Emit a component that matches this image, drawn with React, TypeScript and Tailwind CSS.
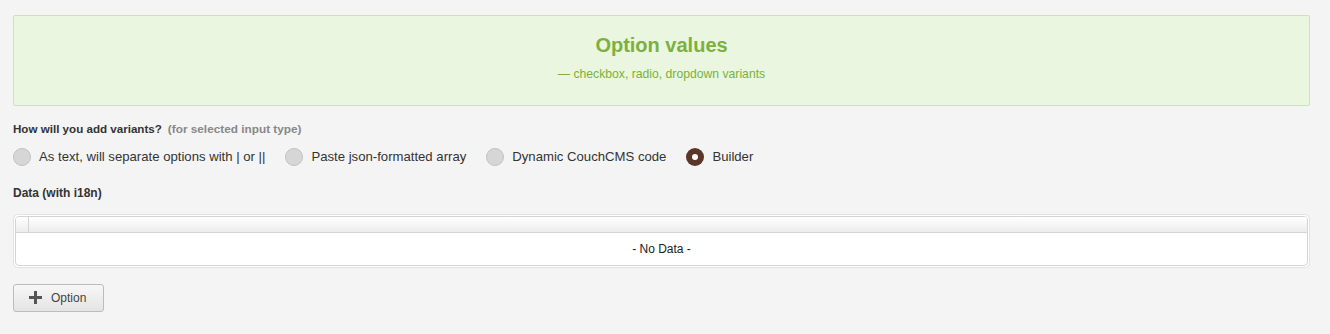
import React from "react";

const Radio = ({ checked, label }: { checked?: boolean; label: string }) => (
  <label className="flex items-center">
    {checked ? (
      <span className="flex h-[18px] w-[18px] items-center justify-center rounded-full bg-[#5c3727]">
        <span className="h-[6px] w-[6px] rounded-full bg-white" />
      </span>
    ) : (
      <span className="h-[18px] w-[18px] rounded-full border border-[#c2c2c2] bg-[#d6d6d6]" />
    )}
    <span className="ml-[8px] text-[13.15px] text-[#333]">{label}</span>
  </label>
);

export default function App() {
  return (
    <div
      className="h-[334px] w-[1330px] bg-[#f4f4f4] pl-[13px] pt-[15px]"
      style={{ fontFamily: '"Liberation Sans", Arial, sans-serif' }}
    >
      <div className="w-[1297px]">
        <div className="flex h-[91px] flex-col items-center rounded-[2px] border border-[#cde3b4] bg-[#eaf6e0]">
          <h2 className="mt-[17px] text-[20px] font-bold leading-[24px] text-[#7bb13c]">Option values</h2>
          <p className="mt-[10px] text-[12.2px] leading-[14px] text-[#7bb13c]">— checkbox, radio, dropdown variants</p>
        </div>

        <div className="mt-[16px] flex items-baseline font-bold leading-[14px]">
          <span className="text-[11.6px] text-[#333]">How will you add variants?</span>
          <span className="ml-[6px] text-[11.8px] text-[#888]">(for selected input type)</span>
        </div>

        <div className="mt-[11px] flex items-center gap-[20px]">
          <Radio label="As text, will separate options with | or ||" />
          <Radio label="Paste json-formatted array" />
          <Radio label="Dynamic CouchCMS code" />
          <Radio checked label="Builder" />
        </div>

        <div className="mt-[19px] text-[12px] font-bold leading-[14px] text-[#333]">Data (with i18n)</div>

        <div className="mt-[14px] rounded-[5px] border border-[#e2e2e2] bg-white p-px">
          <div className="overflow-hidden rounded-[4px] border border-[#d4d4d4]">
            <div className="flex h-[16px] gap-[2px] border-b border-[#d4d4d4] bg-gradient-to-b from-white to-[#ececec] pl-[1px]">
              <div className="w-[12px] border-r border-[#d4d4d4]" />
              <div className="flex-1" />
            </div>
            <div className="flex h-[32px] items-center justify-center text-[12px] text-[#222]">- No Data -</div>
          </div>
        </div>

        <button className="mt-[16px] flex h-[28px] w-[91px] items-center rounded-[3px] border border-[#bcbcbc] bg-gradient-to-b from-[#f7f7f7] to-[#e4e4e4] pl-[15px] text-[12px] text-[#444]">
          <svg width="13" height="13" viewBox="0 0 13 13" className="mr-[9px]">
            <rect x="5" y="0" width="3" height="13" fill="#555" />
            <rect x="0" y="5" width="13" height="3" fill="#555" />
          </svg>
          Option
        </button>
      </div>
    </div>
  );
}
